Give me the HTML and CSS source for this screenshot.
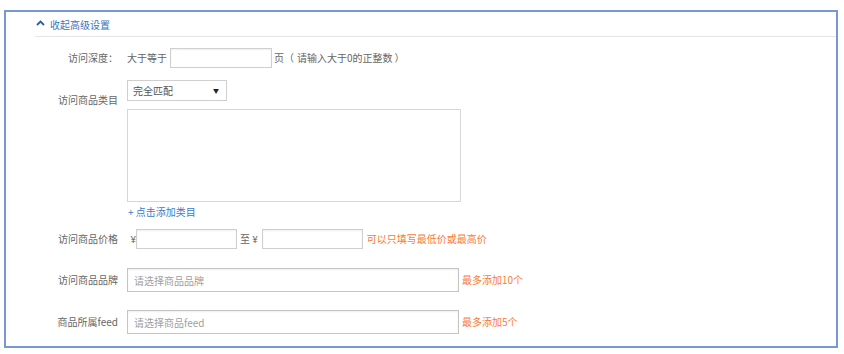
FILE: index.html
```html
<!DOCTYPE html>
<html lang="zh-CN">
<head>
  <meta charset="UTF-8" />
  <title>高级设置</title>
  <link rel="stylesheet" href="styles.css">
</head>
<body>
  <div class="panel">
    <div class="panel-header">
      <svg class="chevron" width="9" height="6" viewBox="0 0 9 6"><path d="M1 5 L4.5 1.5 L8 5" fill="none" stroke="#2d5d9c" stroke-width="1.8"/></svg>
      <span>收起高级设置</span>
    </div>

    <div class="row row-first">
      <label class="row-label">访问深度：</label>
      <span class="txt">大于等于</span>
      <input class="box box-depth" type="text">
      <span class="txt after">页<span class="paren-open">（</span>请输入大于0的正整数<span class="paren-close">）</span></span>
    </div>

    <div class="row row-top">
      <label class="row-label label-cat">访问商品类目</label>
      <div class="cat-field">
        <div class="select-box"><span>完全匹配</span><span class="arrow">▼</span></div>
        <div class="cat-list"></div>
        <a class="add-link" href="#">+ 点击添加类目</a>
      </div>
    </div>

    <div class="row row-price">
      <label class="row-label">访问商品价格</label>
      <span class="yen">¥</span>
      <input class="box box-price" type="text">
      <span class="txt to">至 ¥</span>
      <input class="box box-price" type="text">
      <span class="hint">可以只填写最低价或最高价</span>
    </div>

    <div class="row row-brand">
      <label class="row-label">访问商品品牌</label>
      <input class="box box-wide" type="text" placeholder="请选择商品品牌">
      <span class="hint">最多添加10个</span>
    </div>

    <div class="row row-feed">
      <label class="row-label">商品所属feed</label>
      <input class="box box-wide" type="text" placeholder="请选择商品feed">
      <span class="hint">最多添加5个</span>
    </div>
  </div>
</body>
</html>
```

FILE: styles.css
```css
* { box-sizing: border-box; margin: 0; padding: 0; }
body {
  font-family: "Noto Sans CJK SC", "Noto Sans", sans-serif;
  font-size: 10px;
  color: #666;
  background: #fff;
}
.panel {
  margin: 10px 6px 0 4px;
  height: 338px;
  border: 2px solid #7599d0;
  padding-bottom: 13px;
}
.panel-header {
  margin-left: 29px;
  height: 25px;
  border-bottom: 1px solid #e6e6e6;
  display: flex;
  align-items: center;
  color: #3b74bd;
  font-size: 10px;
}
.chevron { margin: 0 5px 2px 1px; }
.row {
  display: flex;
  align-items: center;
  margin-left: 29px;
}
.row-top { align-items: flex-start; margin-top: 12px; }
.row-first { margin-top: 11px; }
.row-price { margin-top: 10px; }
.row-brand { margin-top: 19px; }
.row-feed { margin-top: 18px; }
.row-label {
  width: 83px;
  text-align: right;
  margin-right: 9px;
  line-height: 14px;
  color: #666;
}
.label-cat { padding-top: 13px; }
.txt { line-height: 14px; }
.after { margin-left: 2px; }
.paren-open { display: inline-block; margin-right: 3px; }
.paren-close { display: inline-block; margin-left: 2px; }
.box {
  font-family: inherit;
  font-size: 10px;
  color: #666;
  border: 1px solid #cfcfcf;
  box-shadow: inset 0 1px 2px rgba(0,0,0,0.07);
  background: #fff;
  outline: none;
  padding: 0 6px;
}
.box::placeholder { color: #a0a0a0; }
.box-depth { width: 102px; height: 20px; margin-left: 3px; }
.cat-field { display: flex; flex-direction: column; align-items: flex-start; }
.select-box {
  width: 100px;
  height: 21px;
  border: 1px solid #cfcfcf;
  display: flex;
  align-items: center;
  justify-content: space-between;
  padding: 0 7px 0 5px;
  color: #555;
}
.arrow { font-size: 6px; color: #222; }
.cat-list {
  margin-top: 8px;
  width: 334px;
  height: 93px;
  border: 1px solid #d6d6d6;
}
.add-link {
  margin: 3px 0 0 1px;
  line-height: 14px;
  color: #3b7bc8;
  text-decoration: none;
}
.yen { width: 9px; text-align: right; line-height: 14px; }
.box-price { width: 101px; height: 20px; }
.to { margin: 0 4px 0 3px; }
.hint { color: #fb7a37; margin-left: 4px; line-height: 14px; }
.box-wide { width: 332px; height: 24px; border-color: #c4c4c4; }
.row-brand .hint, .row-feed .hint { margin-left: 3px; }
```
